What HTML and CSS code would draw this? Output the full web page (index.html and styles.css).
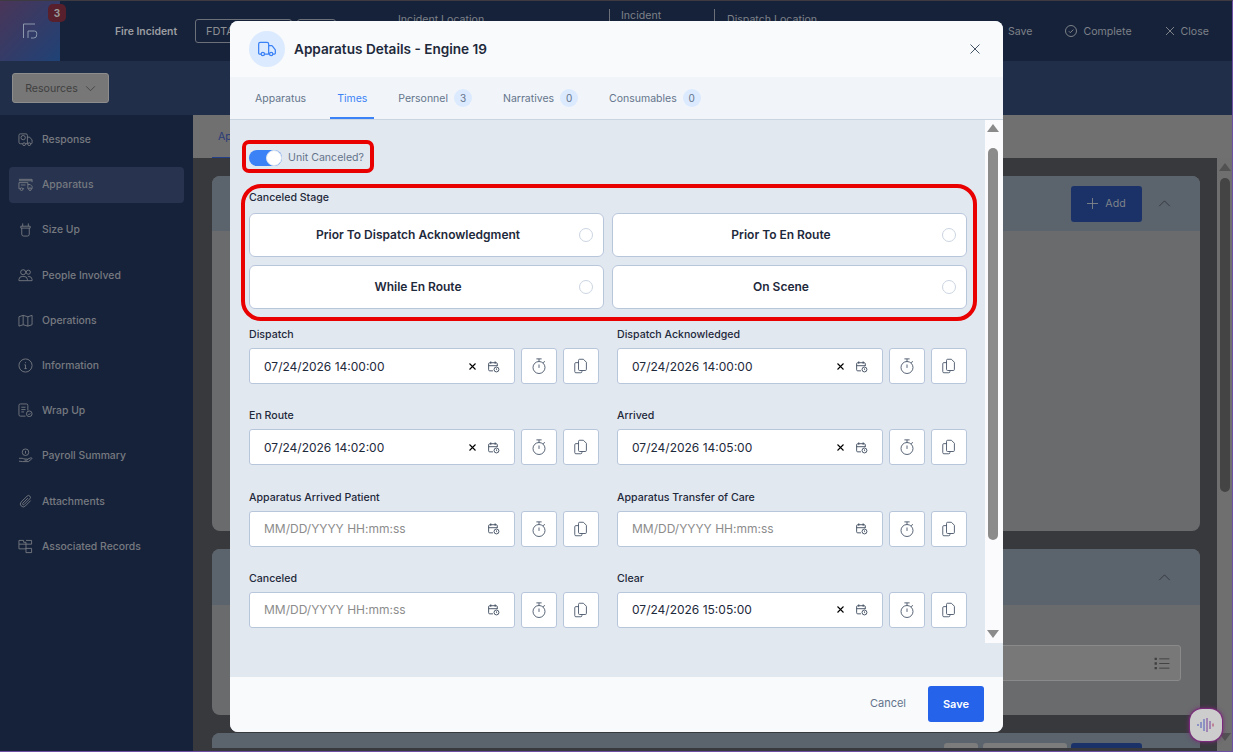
FILE: index.html
```html
<!DOCTYPE html>
<html lang="en">
<head>
    <meta charset="UTF-8">
    <meta name="viewport" content="width=device-width, initial-scale=1.0">
    <title>Apparatus Details - Engine 19</title>
    <link rel="stylesheet" href="styles.css">
</head>
<body>
    <svg class="icon-defs" aria-hidden="true">
        <symbol id="i-stopwatch" viewBox="0 0 24 24"><circle cx="12" cy="14" r="8"/><path d="M8.5 2.5h7M12 2.5V6M12 10v4.5M19.5 5.5 17.8 8"/></symbol>
        <symbol id="i-copy" viewBox="0 0 24 24"><path d="M8.700 4.500a1.500 1.500 0 0 1 1.500-1.500h5l4 4v9.500a1.500 1.500 0 0 1-1.500 1.500h-7.500a1.500 1.500 0 0 1-1.500-1.500z"/><path d="M8.700 7.500H5.200A1.500 1.500 0 0 0 3.700 9v10.500A1.500 1.500 0 0 0 5.200 21H11.700a1.500 1.500 0 0 0 1.500-1.500V18"/></symbol>
        <symbol id="i-calendar" viewBox="0 0 24 24"><path d="M11 20H5a2 2 0 0 1-2-2V7a2 2 0 0 1 2-2h12a2 2 0 0 1 2 2v4M7 2.500V7M15 2.500V7M3 10.500h16"/><circle cx="17.500" cy="17.500" r="4.500"/><path d="M17.500 15.500v2.200l1.300.8"/></symbol>
        <symbol id="i-clear" viewBox="0 0 24 24"><path d="M4 4l16 16M20 4 4 20"/></symbol>
    </svg>

    <div class="app">
        <header class="topbar">
            <div class="logo">
                <svg viewBox="0 0 16 16" width="16" height="16"><path d="M13 1H1.500v14M6 15V8h6.500a2.200 2.200 0 0 1 2.200 2.200v1.600A3 3 0 0 1 11.700 15H9"/></svg>
                <span class="logo-badge">3</span>
            </div>
            <div class="incident-type">Fire Incident</div>
            <div class="top-box top-box-id">FDTA</div>
            <div class="top-box top-box-small"></div>
            <div class="top-field top-field-location">Incident Location</div>
            <div class="top-field top-field-sep top-field-incident">Incident</div>
            <div class="top-field top-field-sep top-field-dispatch">Dispatch Location</div>
            <div class="top-actions">
                <span class="top-action">Save</span>
                <span class="top-action">
                    <svg viewBox="0 0 12 12" width="12" height="12"><circle cx="6" cy="6" r="5.500"/><path d="M3.800 6.200 5.300 7.700 8.300 4.600"/></svg>
                    Complete
                </span>
                <span class="top-action">
                    <svg viewBox="0 0 10 10" width="10" height="10"><path d="M1 1l8 8M9 1 1 9"/></svg>
                    Close
                </span>
            </div>
        </header>

        <div class="subbar">
            <button class="resources-btn">Resources
                <svg viewBox="0 0 12 8" width="11" height="7"><path d="M1 1.500 6 6.500 11 1.500"/></svg>
            </button>
        </div>

        <div class="main">
            <nav class="sidebar">
                <a class="nav-item">
                    <svg viewBox="0 0 16 16"><path d="M5 12.500H2.500a1.500 1.500 0 0 1-1.500-1.500V3.500A1.500 1.500 0 0 1 2.500 2h6A1.500 1.500 0 0 1 10 3.500v9H8M10 5.500h2.500L15 8.500v3a1 1 0 0 1-1 1h-.5M10.500 12.500H10"/><circle cx="6.500" cy="13" r="1.500"/><circle cx="12" cy="13" r="1.500"/><circle cx="5.500" cy="6" r="2.300"/></svg>
                    Response
                </a>
                <a class="nav-item active">
                    <svg viewBox="0 0 16 16"><path d="M1 6h9.500v6.500M1 6v6.500h1.500M6.500 12.500H5M10.500 8H13l2 2v2.500h-1M11.500 12.500h-1M1 4h14M1 2.500h14v3"/><circle cx="3.800" cy="13" r="1.400"/><circle cx="12.800" cy="13" r="1.400"/><path d="M3 8.500h5"/></svg>
                    Apparatus
                </a>
                <a class="nav-item">
                    <svg viewBox="0 0 16 16"><path d="M3 4.500h10v2H3zM4 6.500v6.500a2 2 0 0 0 2 2h4a2 2 0 0 0 2-2V6.500M5 4.500V1.500M11 4.500V1.500"/></svg>
                    Size Up
                </a>
                <a class="nav-item">
                    <svg viewBox="0 0 16 16"><circle cx="5.500" cy="4.500" r="2.700"/><circle cx="11" cy="4.500" r="2.200"/><path d="M1 13.500v-1.500a3.500 3.500 0 0 1 3.500-3h2a3.500 3.500 0 0 1 3.500 3v1.500zM10.500 9h1a3.500 3.500 0 0 1 3.500 3v1.500h-5"/></svg>
                    People Involved
                </a>
                <a class="nav-item">
                    <svg viewBox="0 0 16 16"><path d="M1 4l4.500-1.500L10.500 4 15 2.500v10L10.500 14l-5-1.500L1 14zM5.500 2.500v10M10.500 4v10"/></svg>
                    Operations
                </a>
                <a class="nav-item">
                    <svg viewBox="0 0 16 16"><circle cx="8" cy="8" r="7"/><path d="M6.800 7.300H8v4M6.800 11.300h2.500M8 4.500v1"/></svg>
                    Information
                </a>
                <a class="nav-item">
                    <svg viewBox="0 0 16 16"><path d="M8 14H2.500A1.500 1.500 0 0 1 1 12.500v-10A1.500 1.500 0 0 1 2.500 1h6.500A1.500 1.500 0 0 1 10.500 2.500V8M3.500 4.500H8M3.500 7H8M3.500 9.500h3"/><circle cx="12" cy="11.500" r="3"/><path d="M10.800 11.600l.9.900 1.500-1.600"/></svg>
                    Wrap Up
                </a>
                <a class="nav-item">
                    <svg viewBox="0 0 16 16"><circle cx="8" cy="4.500" r="3.500"/><path d="M8 3v3M1 11h3.500c1 0 1.500.8 3 .8h2c1 0 1 1.200 0 1.200H7M10 12l3.500-1.500c1-.4 1.800.6 1 1.300L11 14.500H5l-4-.5"/></svg>
                    Payroll Summary
                </a>
                <a class="nav-item">
                    <svg viewBox="0 0 16 16"><path d="M13.500 7 7.800 12.800a3 3 0 0 1-4.400-4.300l6.300-6.300a2 2 0 0 1 2.900 2.900L6.400 11.300a1 1 0 0 1-1.400-1.400L10.500 4.400"/></svg>
                    Attachments
                </a>
                <a class="nav-item">
                    <svg viewBox="0 0 16 16"><path d="M1 1.500h5v2h2.500v7H1zM1 5.500h7.500"/><path d="M8.500 1.500h6v4h-6M8.500 10h6v4.500h-6z"/></svg>
                    Associated Records
                </a>
            </nav>

            <div class="content">
                <div class="content-tabs"><span class="content-tab">Apparatus</span></div>
                <div class="content-row">
                    <div class="content-scroll">
                        <section class="panel panel-first">
                            <div class="panel-head">
                                <button class="add-btn">
                                    <svg viewBox="0 0 12 12" width="11" height="11"><path d="M6 0v12M0 6h12"/></svg>
                                    Add
                                </button>
                                <svg class="chevron" viewBox="0 0 14 8" width="13" height="7"><path d="M1 7 7 1l6 6"/></svg>
                            </div>
                        </section>
                        <section class="panel panel-second">
                            <div class="panel-head">
                                <svg class="chevron" viewBox="0 0 14 8" width="13" height="7"><path d="M1 7 7 1l6 6"/></svg>
                            </div>
                            <div class="panel-body">
                                <div class="select-box">
                                    <svg viewBox="0 0 16 14" width="16" height="13"><path d="M5 2h11M5 7h11M5 12h11"/><path class="list-dots" d="M0 2h2.500M0 7h2.500M0 12h2.500"/></svg>
                                </div>
                            </div>
                        </section>
                        <section class="panel panel-third">
                            <div class="panel-head panel-head-tools">
                                <span class="tool tool-a"></span>
                                <span class="tool tool-b"></span>
                                <span class="tool tool-c"></span>
                            </div>
                        </section>
                    </div>
                    <div class="page-scrollbar">
                        <span class="arrow arrow-up"></span>
                        <span class="thumb"></span>
                        <span class="arrow arrow-down"></span>
                    </div>
                </div>
            </div>
        </div>
    </div>

    <div class="voice-widget">
        <svg viewBox="0 0 20 16" width="20" height="16">
            <path class="w1" d="M2 7v2M5 5v6M8 2v12"/>
            <path class="w2" d="M11 1v14M14 4v8"/>
            <path class="w3" d="M17 6.500v3"/>
        </svg>
    </div>

    <div class="modal">
        <div class="modal-head">
            <span class="modal-icon">
                <svg viewBox="0 0 24 24" width="20" height="20"><path d="M14 18V6a2 2 0 0 0-2-2H4a2 2 0 0 0-2 2v11a1 1 0 0 0 1 1h2M15 18H9M19 18h2a1 1 0 0 0 1-1v-3.650a1 1 0 0 0-.22-.624l-3.480-4.350A1 1 0 0 0 17.520 8H14"/><circle cx="17" cy="18" r="2"/><circle cx="7" cy="18" r="2"/></svg>
            </span>
            <h2>Apparatus Details - Engine 19</h2>
            <svg class="modal-close" viewBox="0 0 10 10" width="10" height="10"><path d="M.5.500l9 9M9.500.500l-9 9"/></svg>
        </div>

        <div class="modal-tabs">
            <span class="tab">Apparatus</span>
            <span class="tab tab-active">Times</span>
            <span class="tab">Personnel <b class="count">3</b></span>
            <span class="tab">Narratives <b class="count">0</b></span>
            <span class="tab">Consumables <b class="count">0</b></span>
        </div>

        <div class="modal-body">
            <div class="modal-scroll">
                <label class="switch-row marked marked-small">
                    <span class="switch"><span class="knob"></span></span>
                    <span class="switch-text">Unit Canceled?</span>
                </label>

                <div class="stage marked marked-big">
                    <div class="field-label">Canceled Stage</div>
                    <div class="stage-grid">
                        <div class="stage-card"><span>Prior To Dispatch Acknowledgment</span><i class="radio"></i></div>
                        <div class="stage-card"><span>Prior To En Route</span><i class="radio"></i></div>
                        <div class="stage-card"><span>While En Route</span><i class="radio"></i></div>
                        <div class="stage-card"><span>On Scene</span><i class="radio"></i></div>
                    </div>
                </div>

                <div class="times-grid">
                    <div class="time-field">
                        <div class="field-label">Dispatch</div>
                        <div class="time-row">
                            <div class="time-input"><span class="value">07/24/2026 14:00:00</span>
                                <svg class="ic-clear"><use href="#i-clear"/></svg><svg class="ic-cal"><use href="#i-calendar"/></svg></div>
                            <button class="square-btn"><svg><use href="#i-stopwatch"/></svg></button>
                            <button class="square-btn"><svg><use href="#i-copy"/></svg></button>
                        </div>
                    </div>
                    <div class="time-field">
                        <div class="field-label">Dispatch Acknowledged</div>
                        <div class="time-row">
                            <div class="time-input"><span class="value">07/24/2026 14:00:00</span>
                                <svg class="ic-clear"><use href="#i-clear"/></svg><svg class="ic-cal"><use href="#i-calendar"/></svg></div>
                            <button class="square-btn"><svg><use href="#i-stopwatch"/></svg></button>
                            <button class="square-btn"><svg><use href="#i-copy"/></svg></button>
                        </div>
                    </div>
                    <div class="time-field">
                        <div class="field-label">En Route</div>
                        <div class="time-row">
                            <div class="time-input"><span class="value">07/24/2026 14:02:00</span>
                                <svg class="ic-clear"><use href="#i-clear"/></svg><svg class="ic-cal"><use href="#i-calendar"/></svg></div>
                            <button class="square-btn"><svg><use href="#i-stopwatch"/></svg></button>
                            <button class="square-btn"><svg><use href="#i-copy"/></svg></button>
                        </div>
                    </div>
                    <div class="time-field">
                        <div class="field-label">Arrived</div>
                        <div class="time-row">
                            <div class="time-input"><span class="value">07/24/2026 14:05:00</span>
                                <svg class="ic-clear"><use href="#i-clear"/></svg><svg class="ic-cal"><use href="#i-calendar"/></svg></div>
                            <button class="square-btn"><svg><use href="#i-stopwatch"/></svg></button>
                            <button class="square-btn"><svg><use href="#i-copy"/></svg></button>
                        </div>
                    </div>
                    <div class="time-field">
                        <div class="field-label">Apparatus Arrived Patient</div>
                        <div class="time-row">
                            <div class="time-input"><span class="value placeholder">MM/DD/YYYY HH:mm:ss</span>
                                <svg class="ic-cal"><use href="#i-calendar"/></svg></div>
                            <button class="square-btn"><svg><use href="#i-stopwatch"/></svg></button>
                            <button class="square-btn"><svg><use href="#i-copy"/></svg></button>
                        </div>
                    </div>
                    <div class="time-field">
                        <div class="field-label">Apparatus Transfer of Care</div>
                        <div class="time-row">
                            <div class="time-input"><span class="value placeholder">MM/DD/YYYY HH:mm:ss</span>
                                <svg class="ic-cal"><use href="#i-calendar"/></svg></div>
                            <button class="square-btn"><svg><use href="#i-stopwatch"/></svg></button>
                            <button class="square-btn"><svg><use href="#i-copy"/></svg></button>
                        </div>
                    </div>
                    <div class="time-field">
                        <div class="field-label">Canceled</div>
                        <div class="time-row">
                            <div class="time-input"><span class="value placeholder">MM/DD/YYYY HH:mm:ss</span>
                                <svg class="ic-cal"><use href="#i-calendar"/></svg></div>
                            <button class="square-btn"><svg><use href="#i-stopwatch"/></svg></button>
                            <button class="square-btn"><svg><use href="#i-copy"/></svg></button>
                        </div>
                    </div>
                    <div class="time-field">
                        <div class="field-label">Clear</div>
                        <div class="time-row">
                            <div class="time-input"><span class="value">07/24/2026 15:05:00</span>
                                <svg class="ic-clear"><use href="#i-clear"/></svg><svg class="ic-cal"><use href="#i-calendar"/></svg></div>
                            <button class="square-btn"><svg><use href="#i-stopwatch"/></svg></button>
                            <button class="square-btn"><svg><use href="#i-copy"/></svg></button>
                        </div>
                    </div>
                </div>
            </div>
            <div class="modal-scrollbar">
                <span class="arrow arrow-up"></span>
                <span class="thumb"></span>
                <span class="arrow arrow-down"></span>
            </div>
        </div>

        <div class="modal-foot">
            <button class="cancel-btn">Cancel</button>
            <button class="save-btn">Save</button>
        </div>
    </div>
</body>
</html>
```

FILE: styles.css
```css
*, *::after {
    box-sizing: border-box;
}

html, body {
    height: 100%;
}

body {
    margin: 0;
    font-family: 'Inter', 'Liberation Sans', sans-serif;
    font-size: 10.6px;
    overflow: hidden;
    background-color: #38393d;
}

svg {
    fill: none;
    stroke: currentColor;
    stroke-width: 1;
    flex-shrink: 0;
}

button {
    font-family: inherit;
    cursor: pointer;
}

.icon-defs {
    position: absolute;
    width: 0;
    height: 0;
}

.app {
    height: 752px;
    display: flex;
    flex-direction: column;
    border-top: 1px solid #3e3a42;
    border-right: 1px solid #6d4fa3;
    border-bottom: 1px solid #6d4fa3;
}

/* Top bar */
.topbar {
    height: 60px;
    flex-shrink: 0;
    display: flex;
    align-items: center;
    background-color: #16223a;
    color: #7d8188;
}

.logo {
    width: 60px;
    height: 60px;
    position: relative;
    display: flex;
    align-items: center;
    justify-content: center;
    background: linear-gradient(135deg, #4a3558, #1f4276);
    color: #8c99ad;
}

.logo-badge {
    position: absolute;
    top: 3px;
    right: -6px;
    width: 18px;
    height: 18px;
    border-radius: 5px;
    background-color: #57202c;
    color: #9a9a9a;
    font-size: 10px;
    font-weight: 700;
    text-align: center;
    line-height: 18px;
}

.incident-type {
    margin-left: 55px;
    width: 80px;
    font-size: 10.4px;
    font-weight: 600;
    color: #9b9da1;
}

.top-box {
    height: 24px;
    border: 1px solid #6c7078;
    border-radius: 3px;
    padding: 0 10px;
    line-height: 22px;
    font-size: 11px;
    color: #8b8e93;
}

.top-box-id {
    width: 97px;
}

.top-box-small {
    width: 39px;
    margin-left: 5px;
}

.top-field {
    align-self: flex-start;
    line-height: 14px;
    color: #7d8188;
}

.top-field-location {
    margin-left: 62px;
    width: 211px;
    margin-top: 12px;
}

.top-field-sep {
    border-left: 1px solid #6c7078;
    height: 24px;
    margin-top: 8px;
    padding-left: 11px;
}

.top-field-incident {
    width: 105px;
}

.top-field-dispatch {
    padding-top: 4px;
    padding-left: 12px;
}

.top-actions {
    margin-left: auto;
    margin-right: 23px;
    display: flex;
    align-items: center;
    gap: 33px;
}

.top-action {
    display: flex;
    align-items: center;
    gap: 6px;
}

/* Resources bar */
.subbar {
    height: 54px;
    flex-shrink: 0;
    display: flex;
    align-items: center;
    padding-left: 12px;
    background-color: #212e4a;
}

.resources-btn {
    width: 97px;
    height: 30px;
    display: flex;
    align-items: center;
    justify-content: center;
    gap: 7px;
    background-color: #777;
    border: 1px solid #8d8d8d;
    border-radius: 3px;
    color: #404040;
    font-size: 10.6px;
}

.main {
    flex: 1;
    display: flex;
    min-height: 0;
}

/* Sidebar */
.sidebar {
    width: 193px;
    flex-shrink: 0;
    padding: 6.500px 9px 0;
    display: flex;
    flex-direction: column;
    gap: 9.200px;
    background-color: #16223a;
}

.nav-item {
    height: 36px;
    display: flex;
    align-items: center;
    gap: 9px;
    padding-left: 9px;
    border-radius: 4px;
    color: #767a80;
    font-size: 10.4px;
    font-weight: 500;
}

.nav-item svg {
    width: 15px;
    height: 15px;
    stroke: #7c8086;
    stroke-width: .9;
}

.nav-item.active {
    background-color: #27334f;
}

/* Page content behind the modal */
.content {
    flex: 1;
    display: flex;
    flex-direction: column;
    min-width: 0;
}

.content-tabs {
    height: 43px;
    flex-shrink: 0;
    padding-left: 19px;
    background-color: #707070;
    display: flex;
    align-items: flex-end;
}

.content-tab {
    height: 43px;
    padding: 0 6px;
    line-height: 43px;
    color: #2a3a78;
    border-bottom: 1px solid #24408a;
}

.content-row {
    flex: 1;
    display: flex;
    min-height: 0;
}

.content-scroll {
    flex: 1;
    margin-bottom: 3px;
    padding: 18px 17px 0 19px;
    display: flex;
    flex-direction: column;
    gap: 18px;
    min-width: 0;
    overflow: hidden;
}

.panel {
    flex-shrink: 0;
    border-radius: 8px;
    background-color: #6a6b6d;
    overflow: hidden;
}

.panel-first {
    height: 355px;
}

.panel-second {
    height: 166px;
}

.panel-third {
    height: 80px;
}

.panel-head {
    height: 55px;
    display: flex;
    align-items: center;
    justify-content: flex-end;
    padding-right: 29px;
    background-color: #5b636d;
    color: #33363c;
}

.panel-second .panel-head {
    height: 56px;
}

.add-btn {
    width: 71px;
    height: 36px;
    margin-right: 16px;
    display: flex;
    align-items: center;
    justify-content: center;
    gap: 7px;
    background-color: #1a3268;
    border: none;
    border-radius: 3px;
    color: #7f8389;
    font-size: 10.6px;
}

.panel-body {
    padding: 40px 19px 0 200px;
}

.select-box {
    height: 36px;
    display: flex;
    align-items: center;
    justify-content: flex-end;
    padding-right: 10px;
    background-color: #787878;
    border: 1px solid #8a8a8a;
    border-radius: 3px;
    color: #3f3f3f;
}

.list-dots {
    stroke-width: 2.500;
}

.panel-head-tools {
    align-items: flex-start;
    padding: 10px 58px 0 0;
    gap: 5px;
}

.tool {
    height: 20px;
    border-radius: 3px;
    background-color: #7c7c7c;
}

.tool-a {
    width: 34px;
}

.tool-b {
    width: 84px;
}

.tool-c {
    width: 71px;
    background-color: #1a3268;
    margin-left: -1px;
}

/* Scrollbars */
.page-scrollbar,
.modal-scrollbar {
    position: relative;
    flex-shrink: 0;
    display: flex;
    flex-direction: column;
    align-items: center;
}

.page-scrollbar {
    width: 15px;
    padding-top: 5px;
    background-color: #6f6f6f;
    color: #525252;
}

.modal-scrollbar {
    width: 18px;
    height: 523px;
    padding: 4px 2px 0 0;
    background-color: #fbfbfd;
    color: #8b8b8b;
}

.arrow {
    width: 0;
    height: 0;
    border-left: 6px solid transparent;
    border-right: 6px solid transparent;
}

.arrow-up {
    border-bottom: 8px solid currentColor;
}

.arrow-down {
    position: absolute;
    bottom: 5px;
    border-top: 8px solid currentColor;
}

.page-scrollbar .arrow-down {
    bottom: 10px;
}

.thumb {
    width: 10px;
    border-radius: 5px;
    background-color: currentColor;
}

.page-scrollbar .thumb {
    height: 314px;
    margin-top: 7px;
    background-color: #444;
}

.modal-scrollbar .thumb {
    height: 392px;
    margin-top: 16px;
}

.voice-widget {
    position: absolute;
    left: 1190px;
    top: 709px;
    width: 32px;
    height: 32px;
    display: flex;
    align-items: center;
    justify-content: center;
    border-radius: 12px;
    background-color: #cdcdcd;
    box-shadow: 0 0 0 1px #7a2a7a, 0 0 4px 1px #7a2a7a;
}

.voice-widget .w1 {
    stroke: #4a56b8;
}

.voice-widget .w2 {
    stroke: #7a3f9a;
}

.voice-widget .w3 {
    stroke: #b0365f;
}

/* Modal */
.modal {
    position: absolute;
    left: 230px;
    top: 21px;
    width: 773px;
    height: 711px;
    display: flex;
    flex-direction: column;
    border-radius: 8px;
    overflow: hidden;
    background-color: #e2e8f0;
}

.modal-head {
    height: 56px;
    flex-shrink: 0;
    display: flex;
    align-items: center;
    padding: 0 23px 0 19px;
    background-color: #f8fafc;
}

.modal-icon {
    width: 36px;
    height: 36px;
    border-radius: 50%;
    display: flex;
    align-items: center;
    justify-content: center;
    background-color: #dbeafe;
    color: #3b82f6;
}

.modal-icon svg {
    stroke-width: 1.500;
}

.modal-head h2 {
    flex: 1;
    margin: 0 0 0 9px;
    font-size: 13.6px;
    font-weight: 600;
    color: #1e293b;
}

.modal-close {
    color: #475569;
}

.modal-tabs {
    height: 43px;
    flex-shrink: 0;
    display: flex;
    gap: 17px;
    padding-left: 18px;
    background-color: #f1f5f9;
    border-bottom: 1px solid #cbd5e1;
}

.tab {
    height: 42px;
    display: flex;
    align-items: center;
    gap: 6px;
    padding: 0 7px;
    color: #64748b;
    font-size: 10.5px;
}

.tab-active {
    color: #3b82f6;
    box-shadow: inset 0 -2px 0 #3b82f6;
}

.count {
    width: 18px;
    height: 18px;
    border-radius: 50%;
    background-color: #dbeafe;
    font-size: 10px;
    font-weight: 400;
    line-height: 18px;
    text-align: center;
}

.modal-body {
    flex: 1;
    display: flex;
    align-items: flex-start;
    min-height: 0;
}

.modal-scroll {
    flex: 1;
    padding: 30px 18px 0 19px;
    min-width: 0;
}

/* Red annotation frames drawn over the form */
.marked {
    position: relative;
}

.marked::after {
    content: "";
    position: absolute;
    border: 4px solid #e90000;
    pointer-events: none;
}

.marked-small::after {
    left: -7px;
    top: -10px;
    width: 132px;
    height: 33px;
    border-radius: 7px;
}

.marked-big::after {
    left: -8px;
    top: -6px;
    right: -10px;
    bottom: -12px;
    border-radius: 20px;
}

.switch-row {
    display: flex;
    align-items: center;
    gap: 6px;
    height: 16px;
    color: #64748b;
}

.switch-text {
    margin-bottom: 1px;
}

.switch {
    width: 33px;
    height: 16px;
    border-radius: 8px;
    background-color: #3b82f6;
    display: flex;
    justify-content: flex-end;
}

.knob {
    width: 16px;
    height: 16px;
    border-radius: 50%;
    background-color: #fff;
    border: 1px solid #dbe4f0;
}

.stage {
    margin-top: 24px;
}

.field-label {
    height: 14px;
    line-height: 16px;
    font-weight: 500;
    color: #1e293b;
}

.stage-grid {
    margin-top: 9px;
    display: grid;
    grid-template-columns: 355px 355px;
    gap: 8px;
}

.stage-card {
    height: 44px;
    display: flex;
    align-items: center;
    padding: 0 10px 0 7px;
    background-color: #fff;
    border: 1px solid #b8c6dc;
    border-radius: 6px;
}

.stage-card span {
    flex: 1;
    padding-bottom: 2px;
    text-align: center;
    font-size: 12px;
    font-weight: 600;
    color: #1e293b;
}

.radio {
    width: 14px;
    height: 14px;
    border: 1px solid #cbd5e1;
    border-radius: 50%;
    background-color: #fff;
}

.times-grid {
    margin-top: 18px;
    display: grid;
    grid-template-columns: 350px 350px;
    column-gap: 18px;
    row-gap: 24.330px;
}

.time-row {
    margin-top: 7px;
    display: flex;
    gap: 6px;
}

.time-input {
    width: 266px;
    height: 36px;
    display: flex;
    align-items: center;
    padding: 0 14px;
    background-color: #fff;
    border: 1px solid #b8c6dc;
    border-radius: 3px;
}

.value {
    flex: 1;
    font-size: 12px;
    color: #1e293b;
}

.value.placeholder {
    color: #8c8c8c;
}

.ic-clear {
    width: 9px;
    height: 9px;
    margin-right: 10px;
    color: #000;
    stroke-width: 3;
}

.ic-cal {
    width: 13px;
    height: 13px;
    color: #334155;
    stroke-width: 1.600;
}

.square-btn {
    width: 36px;
    height: 36px;
    padding: 0;
    display: flex;
    align-items: center;
    justify-content: center;
    background-color: #fff;
    border: 1px solid #b8c6dc;
    border-radius: 3px;
    color: #475569;
}

.square-btn svg {
    width: 18px;
    height: 18px;
    stroke-width: 1.200;
}

.modal-foot {
    height: 55px;
    flex-shrink: 0;
    display: flex;
    align-items: flex-start;
    justify-content: flex-end;
    gap: 22px;
    padding: 9px 19px 0 0;
    background-color: #f8fafc;
}

.cancel-btn {
    height: 34px;
    background: none;
    border: none;
    padding: 0;
    color: #64748b;
    font-size: 11px;
}

.save-btn {
    width: 56px;
    height: 36px;
    background-color: #2563eb;
    border: none;
    border-radius: 3px;
    color: #fff;
    font-size: 11px;
    font-weight: 600;
}
```
